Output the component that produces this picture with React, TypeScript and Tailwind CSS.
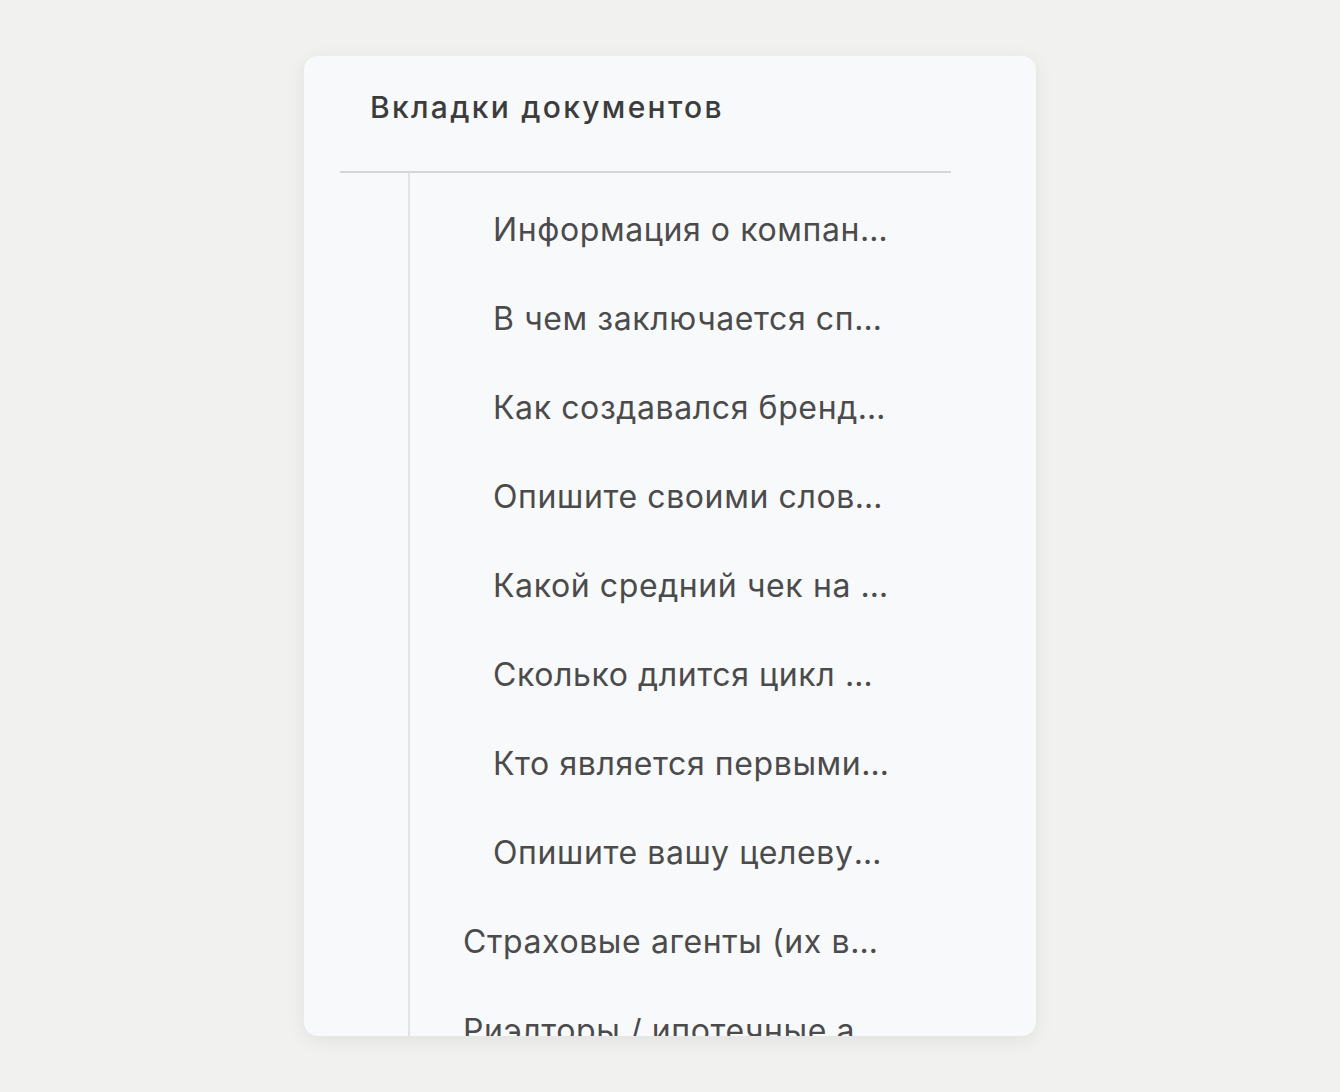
import React from "react";

interface TabItem {
  title: string;
  level: number;
}

const tabs: TabItem[] = [
  { title: "Информация о компании", level: 2 },
  { title: "В чем заключается специфика вашего бизнеса", level: 2 },
  { title: "Как создавался бренд компании", level: 2 },
  { title: "Опишите своими словами продукт", level: 2 },
  { title: "Какой средний чек на услуги", level: 2 },
  { title: "Сколько длится цикл сделки", level: 2 },
  { title: "Кто является первыми клиентами", level: 2 },
  { title: "Опишите вашу целевую аудиторию", level: 2 },
  { title: "Страховые агенты (их вознаграждение)", level: 1 },
  { title: "Риэлторы / ипотечные агенты", level: 1 },
];

const App: React.FC = () => {
  return (
    <div
      className="min-h-screen w-full bg-[#f1f1f0] pt-[56px] pl-[304px]"
      style={{ fontFamily: "Inter, 'Noto Sans', sans-serif" }}
    >
      <div className="w-[732px] h-[980px] overflow-hidden rounded-[14px] bg-[#f8f9fb] shadow-[0_4px_20px_rgba(0,0,0,0.07)]">
        {/* Header */}
        <div className="h-[115px] pl-[66px] pt-[31px]">
          <h2 className="text-[30px] leading-[40px] font-medium tracking-[2.3px] text-[#3c3c3c]">
            Вкладки документов
          </h2>
        </div>

        {/* Tab tree */}
        <div className="ml-[36px] mr-[85px] border-t-2 border-[#d6d6d6] flex">
          <div className="w-[68px] shrink-0" />
          <div className="flex-1 min-w-0 border-l-2 border-[#e3e3e3] pt-[12px] pr-[61px] h-[900px]">
            {tabs.map((tab) => (
              <div
                key={tab.title}
                className={`h-[89px] flex items-center ${
                  tab.level === 2 ? "pl-[83px]" : "pl-[53px]"
                }`}
              >
                <span className="truncate text-[32px] leading-[40px] tracking-[0.6px] text-[#4b4b4b]">
                  {tab.title}
                </span>
              </div>
            ))}
          </div>
        </div>
      </div>
    </div>
  );
};

export default App;
